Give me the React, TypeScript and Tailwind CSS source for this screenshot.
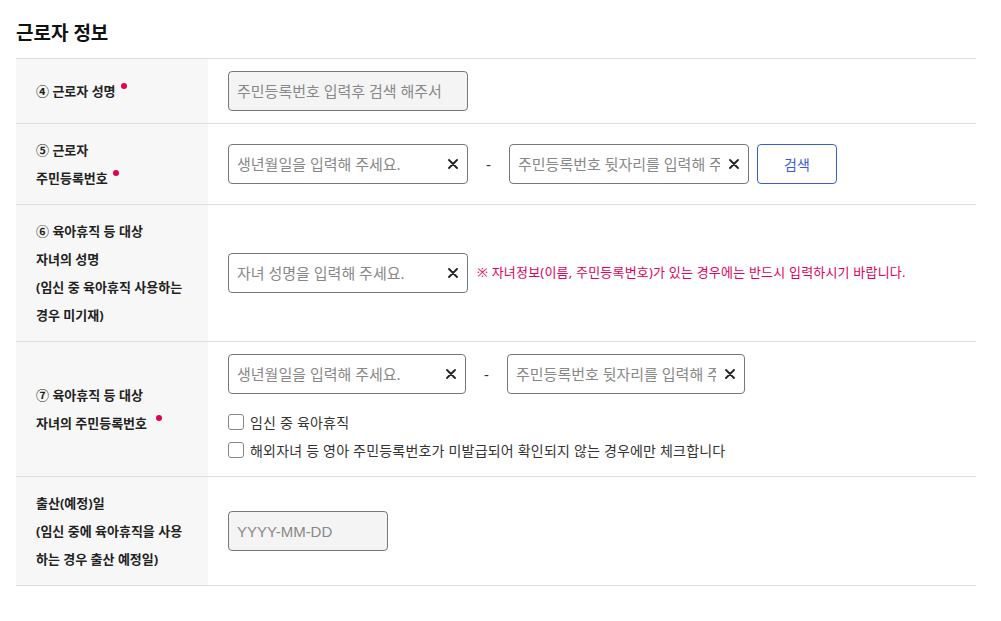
import React from "react";

const FONT = { fontFamily: '"Noto Sans", "Noto Sans CJK KR", sans-serif' };
const LATIN = { fontFamily: '"Liberation Sans", "Noto Sans CJK KR", sans-serif' };

function ClearIcon() {
  return (
    <svg width="10" height="10" viewBox="0 0 10 10" className="shrink-0">
      <path d="M1 1 L9 9 M9 1 L1 9" stroke="#222" strokeWidth="1.8" strokeLinecap="round" />
    </svg>
  );
}

function TextInput({
  placeholder,
  width,
  readOnly,
  clear = true,
  latin,
}: {
  placeholder: string;
  width: string;
  readOnly?: boolean;
  clear?: boolean;
  latin?: boolean;
}) {
  return (
    <div
      className={`relative h-10 ${width} border border-[#777] rounded-[4px] flex items-center ${readOnly ? "bg-[#f4f4f4]" : "bg-white"}`}
    >
      <input
        readOnly={readOnly}
        placeholder={placeholder}
        className={`w-full h-full bg-transparent outline-none pl-2 ${clear ? "pr-[28px]" : "pr-2"} text-[15px] text-[#222] placeholder:text-[#888]`}
        style={latin ? LATIN : FONT}
      />
      {clear && (
        <span className="absolute right-[9px] top-1/2 -translate-y-1/2 flex">
          <ClearIcon />
        </span>
      )}
    </div>
  );
}

function Dot({ className = "ml-[5px]" }: { className?: string }) {
  return <span className={`inline-block w-[6px] h-[6px] rounded-full bg-[#e5004f] align-middle relative -top-[6px] ${className}`} />;
}

function Dash() {
  return <span className="w-[41px] text-center text-[15px] text-[#333]">-</span>;
}

function Row({ label, children }: { label: React.ReactNode; children: React.ReactNode }) {
  return (
    <div className="flex border-b border-[#dedede]">
      <div className="w-[192px] shrink-0 bg-[#f7f7f7] pl-5 pr-3 py-3 flex items-center">
        <div className="text-[13px] font-bold leading-[28px] text-[#222]">{label}</div>
      </div>
      <div className="flex-1 pl-5 py-3 flex items-center">{children}</div>
    </div>
  );
}

function Check({ label }: { label: string }) {
  return (
    <label className="flex items-center h-[28px] text-[14px] tracking-[0.2px] text-[#333]">
      <input type="checkbox" className="appearance-none w-4 h-4 border border-[#888] rounded-[3px] bg-white mr-[6px] shrink-0" />
      <span>{label}</span>
    </label>
  );
}

export default function App() {
  return (
    <div className="w-[1001px] h-[621px] bg-white px-4 pt-[19px]" style={FONT}>
      <h2 className="text-[19px] font-bold leading-[28px] text-[#111] mb-[11px]">근로자 정보</h2>
      <div className="w-[960px] border-t border-[#dedede]">
        <Row
          label={
            <>
              ④ 근로자 성명
              <Dot />
            </>
          }
        >
          <TextInput placeholder="주민등록번호 입력후 검색 해주서" width="w-[240px]" readOnly clear={false} />
        </Row>
        <Row
          label={
            <>
              ⑤ 근로자
              <br />
              주민등록번호
              <Dot />
            </>
          }
        >
          <div className="flex items-center">
            <TextInput placeholder="생년월일을 입력해 주세요." width="w-[240px]" />
            <Dash />
            <TextInput placeholder="주민등록번호 뒷자리를 입력해 주세요." width="w-[240px]" />
            <button className="ml-2 w-20 h-10 border border-[#3a5bd9] rounded-[4px] text-[14px] text-[#3a5bd9] bg-white">
              검색
            </button>
          </div>
        </Row>
        <Row
          label={
            <>
              ⑥ 육아휴직 등 대상
              <br />
              자녀의 성명
              <br />
              <span>(임신 중 육아휴직 사용하는</span>
              <br />
              <span>경우 미기재)</span>
            </>
          }
        >
          <div className="flex items-center">
            <TextInput placeholder="자녀 성명을 입력해 주세요." width="w-[240px]" />
            <span className="ml-[9px] text-[13px] tracking-[0.2px] text-[#e4005a]">
              ※ 자녀정보(이름, 주민등록번호)가 있는 경우에는 반드시 입력하시기 바랍니다.
            </span>
          </div>
        </Row>
        <Row
          label={
            <>
              ⑦ 육아휴직 등 대상
              <br />
              자녀의 주민등록번호
              <Dot className="ml-[9px]" />
            </>
          }
        >
          <div className="flex flex-col">
            <div className="flex items-center">
              <TextInput placeholder="생년월일을 입력해 주세요." width="w-[238px]" />
              <Dash />
              <TextInput placeholder="주민등록번호 뒷자리를 입력해 주세요." width="w-[238px]" />
            </div>
            <div className="mt-[14px] flex flex-col">
              <Check label="임신 중 육아휴직" />
              <Check label="해외자녀 등 영아 주민등록번호가 미발급되어 확인되지 않는 경우에만 체크합니다" />
            </div>
          </div>
        </Row>
        <Row
          label={
            <>
              출산(예정)일
              <br />
              (임신 중에 육아휴직을 사용
              <br />
              하는 경우 출산 예정일)
            </>
          }
        >
          <TextInput placeholder="YYYY-MM-DD" width="w-[160px]" readOnly clear={false} latin />
        </Row>
      </div>
    </div>
  );
}
